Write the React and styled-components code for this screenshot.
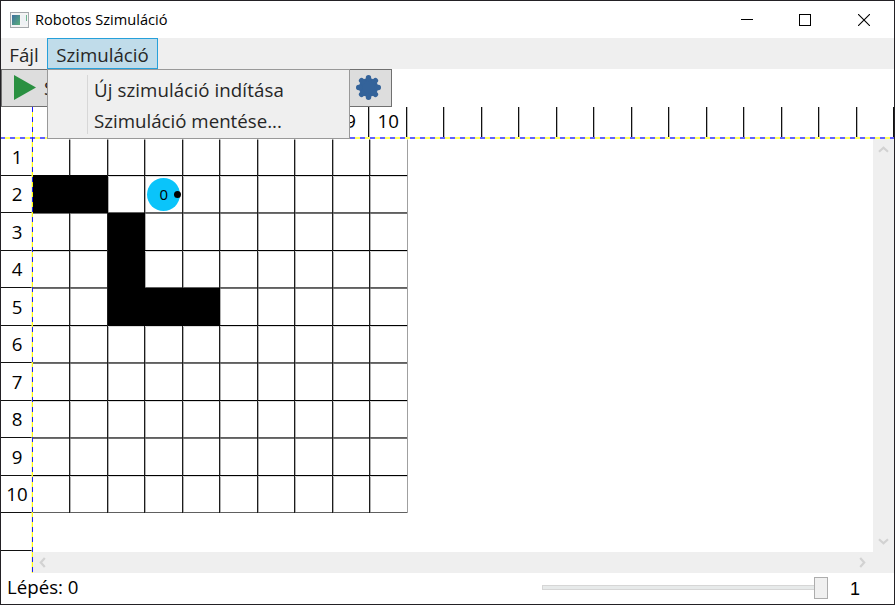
import React from "react";
import styled, { createGlobalStyle, css } from "styled-components";

const Global = createGlobalStyle`
  * { box-sizing: border-box; }
  body { margin: 0; background: #fff; overflow: hidden; }
`;

const Window = styled.div`
  position: relative;
  display: flex;
  flex-direction: column;
  width: 895px;
  height: 605px;
  border: 1px solid #232125;
  background: #fff;
  color: #262626;
  font-family: "Open Sans", "Noto Sans", sans-serif;
  font-size: 18.7px;
  white-space: nowrap;
`;
const TitleBar = styled.header`
  display: flex;
  align-items: center;
  height: 37px;
  padding: 0 1px 0 9px;
  color: #000;
`;
const Title = styled.span`
  flex: 1;
  margin: -2px 0 0 6px;
  font-size: 14.6px;
`;
const Caption = styled.span`
  display: grid;
  place-items: center;
  width: 58.5px;
  height: 37px;
`;
const MenuBar = styled.nav`
  display: flex;
  height: 31px;
  background: #efefef;
`;
const MenuItem = styled.span`
  display: flex;
  align-items: center;
  justify-content: center;
  width: ${(p) => p.$width}px;
  padding-top: 2px;
  border: 1px solid ${(p) => (p.$open ? "#26a0da" : "transparent")};
  background: ${(p) => (p.$open ? "#c0dcea" : "transparent")};
`;
const Menu = styled.div`
  position: absolute;
  left: 46px;
  top: 68px;
  display: flex;
  width: 303px;
  height: 70px;
  border: 1px solid #999;
  background: #efefef;
  z-index: 2;
`;
const MenuGutter = styled.div`
  width: 40px;
  height: 59px;
  margin-top: 5px;
  border-right: 1px solid #d7d7d7;
`;
const MenuList = styled.div`
  display: flex;
  flex-direction: column;
  padding: 4px 0 0 6px;
`;
const MenuEntry = styled.span`
  height: 31px;
  line-height: 31px;
  letter-spacing: ${(p) => p.$tracking || 0}px;
`;
const ToolBar = styled.div`
  display: flex;
  height: 38px;
`;
const ToolButton = styled.span`
  display: flex;
  align-items: center;
  width: ${(p) => p.$width}px;
  padding: 0 0 1px ${(p) => p.$pad}px;
  gap: 8px;
  border: 1px solid #707070;
  background: #ddd;
  overflow: hidden;
`;
const Workspace = styled.main`
  display: grid;
  grid-template-columns: 32px 840px 21px;
  grid-template-rows: 32px 413px 21px;
  height: 466px;
`;
const Corner = styled.div`
  background:
    repeating-linear-gradient(180deg, #1a1aff 0 5px, #ffff10 5px 10px) right / 1px 100% no-repeat,
    repeating-linear-gradient(90deg, #6060ff 0 4px, #ffff60 4px 9px, #6060ff 9px 10px) bottom / 100% 2px no-repeat;
`;
const ColumnRuler = styled.div`
  position: relative;
  grid-column: 2 / 4;
  display: grid;
  grid-template-columns: 36.4px repeat(22, 37.5px);
  overflow: hidden;
  &::after {
    content: "";
    position: absolute;
    inset: auto 0 0 0;
    height: 2px;
    background: repeating-linear-gradient(90deg, #6060ff 0 2px, #ffff60 2px 7px, #6060ff 7px 10px);
  }
`;
const RowRuler = styled.div`
  position: relative;
  grid-row: 2 / 4;
  display: grid;
  grid-template-rows: 36.9px repeat(11, 37.5px);
  align-content: start;
  overflow: hidden;
  &::after {
    content: "";
    position: absolute;
    inset: 0 0 0 auto;
    width: 1px;
    background: repeating-linear-gradient(180deg, #1a1aff 0 3px, #ffff10 3px 8px, #1a1aff 8px 10px);
    box-shadow: -1px 0 rgba(255, 255, 120, 0.5);
  }
`;
const Tick = styled.span`
  display: flex;
  align-items: center;
  justify-content: center;
  color: #000;
  ${(p) =>
    p.$row
      ? css`
          border-bottom: 1px solid #111;
          padding-bottom: 1px;
        `
      : css`
          border-right: 1px solid #111;
          box-shadow: 1px 0 #bbb;
          padding: 0 0 5px 1px;
        `}
`;
const Board = styled.div`
  display: grid;
  align-content: start;
  grid-template-columns: repeat(10, 37.5px);
  grid-auto-rows: 37.5px;
  margin: -0.6px 0 0 -0.1px;
  clip-path: inset(1px 0 0 0);
`;
const line = (color, side, size) => `linear-gradient(${color}, ${color}) ${side} / ${size} no-repeat`;
const gridLines = (p) => {
  if (p.$wall) return "#000";
  const odd = p.$row % 2 === 1;
  return [
    line(p.$col === 9 ? "#a0a0a0" : "#1c1c1c", "right", "1px 100%"),
    line(odd ? "#606060" : "#000", "bottom", "100% 1px"),
    line(p.$row === 0 ? "#fff" : odd ? "#dcdcdc" : "#707070", "top", "100% 1px"),
    line(p.$col === 0 ? "#fff" : "#b0b0b0", "left", "1px 100%"),
    "#fff",
  ].join(", ");
};
const Cell = styled.div`
  position: relative;
  background: ${gridLines};
`;
const Robot = styled.div`
  position: absolute;
  left: 2px;
  top: 2px;
  display: grid;
  place-items: center;
  width: 33px;
  height: 33px;
  border-radius: 50%;
  background: #0ac4fa;
  color: #000;
  font-size: 15px;
  z-index: 1;
  &::after {
    content: "";
    position: absolute;
    right: -1px;
    top: 13px;
    width: 7px;
    height: 7px;
    border-radius: 50%;
    background: #000;
  }
`;
const ScrollBar = styled.div`
  display: flex;
  flex-direction: ${(p) => (p.$vertical ? "column" : "row")};
  justify-content: space-between;
  align-items: center;
  padding: ${(p) => (p.$vertical ? "5px 0" : "0 5px 0 4px")};
  background: #efefef;
`;
const ScrollCorner = styled.div`
  background: #efefef;
`;
const StatusBar = styled.footer`
  display: flex;
  align-items: center;
  height: 31px;
  padding: 0 0 2px 6px;
  color: #000;
`;
const Step = styled.span`
  width: 535px;
  padding-bottom: 2px;
`;
const Slider = styled.div`
  display: flex;
  align-items: center;
  width: 286px;
`;
const Track = styled.div`
  flex: 1;
  height: 5px;
  border: 1px solid #d6d6d6;
  border-right: 0;
  background: #e7eaea;
`;
const Thumb = styled.div`
  width: 14px;
  height: 22px;
  border: 1px solid #adadad;
  background: #f0f0f0;
`;
const Speed = styled.span`
  margin: 3px 0 0 22px;
  font-family: "Liberation Sans", sans-serif;
  font-size: 18px;
`;

const Chevron = ({ angle }) => (
  <svg width="11" height="11" viewBox="0 0 11 11">
    <path d="M1 7.8 L5.5 3.8 L10 7.8" fill="none" stroke="#d2d2d2" strokeWidth="2.2" transform={`rotate(${angle} 5.5 5.5)`} />
  </svg>
);

const AppIcon = () => (
  <svg width="19" height="16" viewBox="0 0 19 16">
    <defs>
      <linearGradient id="pane" x1="0" y1="0" x2="1" y2="1">
        <stop offset="0" stopColor="#3f6fa0" />
        <stop offset="1" stopColor="#5ab07a" />
      </linearGradient>
    </defs>
    <rect x=".5" y=".5" width="18" height="15" fill="#f4f4f4" stroke="#a4a8ac" />
    <rect x="2" y="3" width="8" height="10" fill="url(#pane)" />
    <rect x="11" y="3" width="6" height="10" fill="#eef1f4" />
    <rect x="16" y="3" width="1" height="6" fill="#6fb590" />
  </svg>
);

const Gear = () => (
  <svg width="25" height="25" viewBox="-12.5 -12.5 25 25" fill="#34639a">
    <circle r="9.6" />
    {[0, 45, 90, 135, 180, 225, 270, 315].map((a) => (
      <rect key={a} x="-2.7" y="-12.5" width="5.4" height="7" rx="2.7" transform={`rotate(${a})`} />
    ))}
  </svg>
);

const WALLS = new Set(["1,0", "1,1", "2,2", "3,2", "4,2", "4,3", "4,4"]);
const COLUMN_LABELS = { 8: "9", 9: "10" };
const range = (n) => Array.from({ length: n }, (_, i) => i);

export default function App() {
  return (
    <Window>
      <Global />
      <TitleBar>
        <AppIcon />
        <Title>Robotos Szimuláció</Title>
        <Caption>
          <svg width="12" height="12"><path d="M0 5.5H12" stroke="#000" /></svg>
        </Caption>
        <Caption>
          <svg width="12" height="12"><rect x=".5" y=".5" width="11" height="11" fill="none" stroke="#000" /></svg>
        </Caption>
        <Caption>
          <svg width="12" height="12"><path d="M0 0L12 12M12 0L0 12" stroke="#000" strokeWidth="1.1" /></svg>
        </Caption>
      </TitleBar>
      <MenuBar>
        <MenuItem $width={46}>Fájl</MenuItem>
        <MenuItem $width={111} $open>Szimuláció</MenuItem>
      </MenuBar>
      <Menu>
        <MenuGutter />
        <MenuList>
          <MenuEntry $tracking={0.09}>Új szimuláció indítása</MenuEntry>
          <MenuEntry>Szimuláció mentése...</MenuEntry>
        </MenuList>
      </Menu>
      <ToolBar>
        <ToolButton $width={345} $pad={12}>
          <svg width="22" height="25"><path d="M0 0L22 12.5L0 25Z" fill="#2a9041" /></svg>
          Start
        </ToolButton>
        <ToolButton $width={46} $pad={9}>
          <Gear />
        </ToolButton>
      </ToolBar>
      <Workspace>
        <Corner />
        <ColumnRuler>
          {range(23).map((i) => <Tick key={i}>{COLUMN_LABELS[i]}</Tick>)}
        </ColumnRuler>
        <RowRuler>
          {range(12).map((i) => <Tick key={i} $row>{i < 10 ? i + 1 : ""}</Tick>)}
        </RowRuler>
        <Board>
          {range(100).map((i) => {
            const row = Math.floor(i / 10);
            const col = i % 10;
            return (
              <Cell key={i} $wall={WALLS.has(`${row},${col}`)} $row={row} $col={col}>
                {row === 1 && col === 3 && <Robot>0</Robot>}
              </Cell>
            );
          })}
        </Board>
        <ScrollBar $vertical>
          <Chevron angle={0} />
          <Chevron angle={180} />
        </ScrollBar>
        <ScrollBar>
          <Chevron angle={-90} />
          <Chevron angle={90} />
        </ScrollBar>
        <ScrollCorner />
      </Workspace>
      <StatusBar>
        <Step>Lépés: 0</Step>
        <Slider>
          <Track />
          <Thumb />
        </Slider>
        <Speed>1</Speed>
      </StatusBar>
    </Window>
  );
}
